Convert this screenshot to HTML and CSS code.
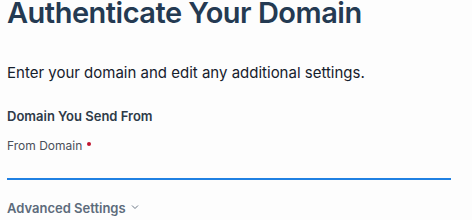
FILE: index.html
```html
<!DOCTYPE html>
<html>
<head>
<meta charset="utf-8">
<link rel="stylesheet" href="styles.css">
</head>
<body>
<div class="page">
  <h1 class="title">Authenticate Your Domain</h1>
  <p class="lead">Enter your domain and edit any additional settings.</p>
  <h2 class="section">Domain You Send From</h2>
  <label class="label">From Domain <span class="req"></span></label>
  <div class="input"></div>
  <div class="advanced">Advanced Settings
    <svg class="chev" width="8" height="6" viewBox="0 0 8 6"><path d="M1 1.5 L4 4.5 L7 1.5" fill="none" stroke="#6b7785" stroke-width="1"/></svg>
  </div>
</div>
</body>
</html>
```
FILE: styles.css
```css
html, body { margin: 0; padding: 0; background: #fdfdfd; }
body { font-family: Inter, "Noto Sans", sans-serif; }
.page { padding: 0 21px 0 7px; display: flex; flex-direction: column; }
.title { margin: 0; font-size: 29px; font-weight: 600; color: #243a52; line-height: 26px; letter-spacing: -0.5px; }
.lead { margin: 38px 0 0 0; font-size: 15px; color: #16202c; line-height: 18px; }
.section { margin: 26px 0 0 0; font-size: 13px; font-weight: 600; color: #2d3a48; line-height: 16px; }
.label { margin-top: 14px; font-size: 12px; color: #4a4f5a; line-height: 16px; display: flex; align-items: center; gap: 5px; }
.req { width: 4px; height: 4px; border-radius: 50%; background: #c0152f; margin-top: -4px; }
.input { height: 24px; border-bottom: 2px solid #1f80e2; }
.advanced { margin-top: 20px; font-size: 13px; font-weight: 600; color: #5c6b7b; line-height: 16px; display: flex; align-items: center; gap: 5px; }
.chev { margin-top: -3px; }
```
